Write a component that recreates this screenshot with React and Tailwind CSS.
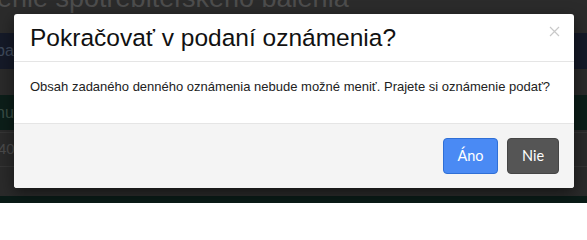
import React from "react";

export default function App() {
  return (
    <div className="relative w-[587px] h-[203px] overflow-hidden bg-[#2b2b2b]" style={{ fontFamily: '"Liberation Sans", Arial, sans-serif' }}>
      {/* dimmed page underneath */}
      <div className="flex flex-col w-full h-full">
        <div className="h-[33px] bg-[#2b2b2b] overflow-hidden">
          <div className="mt-[-15px] ml-[-81px] whitespace-nowrap text-[27px] leading-[27px] text-[#4d4d4d]">
            Označenie spotrebiteľského balenia
          </div>
        </div>
        <div className="h-[36px] bg-[#151a28] flex items-center text-[16px] text-[#3f4a5c]">
          <span className="ml-[-4px]">ba</span>
        </div>
        <div className="h-[26px] bg-[#2a2a2a]" />
        <div className="h-[35px] bg-[#0c1e19] flex items-center text-[16px] text-[#3a4d45]">
          <span className="ml-[-4px]">nu</span>
        </div>
        <div className="h-[3px] bg-[#2a2a2a] border-b border-[#353535]" />
        <div className="h-[34px] bg-[#2a2a2a] border-b border-[#353535] flex items-center text-[15px] text-[#4a4a4a]">
          <span className="ml-[-2px]">40</span>
        </div>
        <div className="h-[29px] bg-[#2a2a2a]" />
        <div className="flex-1 bg-[#0a1b17]" />
      </div>

      {/* modal */}
      <div className="absolute left-[14px] top-[14px] w-[560px] h-[174px] bg-white rounded-[3px] shadow-[0_5px_15px_rgba(0,0,0,0.5)] flex flex-col overflow-hidden">
        <div className="h-[48px] shrink-0 border-b border-[#e5e5e5] flex items-center justify-between pl-[16px] pr-[14px]">
          <h4 className="text-[24.5px] leading-[26px] text-[#111] m-0 font-normal whitespace-nowrap">Pokračovať v podaní oznámenia?</h4>
          <button className="w-[12px] h-[12px] flex items-center justify-center mb-[12px]" aria-label="Close">
            <svg width="11" height="11" viewBox="0 0 11 11">
              <path d="M1 1 L10 10 M10 1 L1 10" stroke="#c9c9c9" strokeWidth="1.2" fill="none" />
            </svg>
          </button>
        </div>
        <div className="h-[61px] shrink-0 pl-[16px] pt-[15px] text-[13px] leading-[20px] text-[#222] whitespace-nowrap">
          Obsah zadaného denného oznámenia nebude možné meniť. Prajete si oznámenie podať?
        </div>
        <div className="flex-1 border-t border-[#e5e5e5] bg-[#f4f4f4] flex items-start justify-end pt-[14px] pr-[15px] gap-[9px]" style={{ fontFamily: 'Lato, "Liberation Sans", sans-serif' }}>
          <button className="w-[55px] h-[36px] rounded-[4px] bg-[#4a8af4] border border-[#2f6fd6] text-white text-[14.5px] flex items-center justify-center">
            Áno
          </button>
          <button className="w-[52px] h-[36px] rounded-[4px] bg-[#555555] border border-[#454545] text-white text-[14.5px] flex items-center justify-center">
            Nie
          </button>
        </div>
      </div>
    </div>
  );
}
